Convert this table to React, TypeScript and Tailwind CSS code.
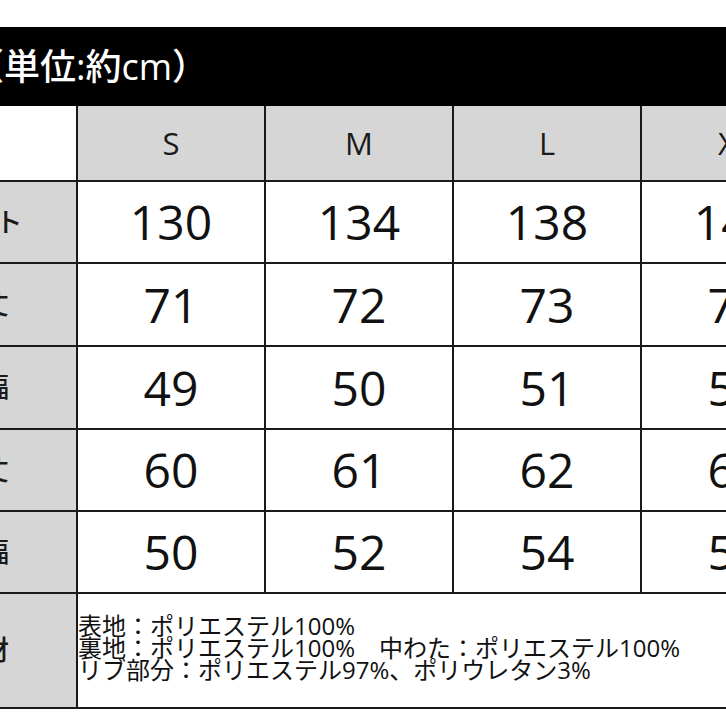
import React from "react";

const font = { fontFamily: '"Open Sans", "Noto Sans CJK JP", sans-serif' };

const rows: { label: string; vals: string[]; h: string }[] = [
  { label: "バスト", vals: ["130", "134", "138", "142"], h: "h-[80px]" },
  { label: "着丈", vals: ["71", "72", "73", "74"], h: "h-[81px]" },
  { label: "肩幅", vals: ["49", "50", "51", "52"], h: "h-[81px]" },
  { label: "袖丈", vals: ["60", "61", "62", "63"], h: "h-[80px]" },
  { label: "裾幅", vals: ["50", "52", "54", "56"], h: "h-[80px]" },
];

function Label({ text, h }: { text: string; h: string }) {
  return (
    <div className={`${h} bg-[#d6d6d6] flex justify-end items-center overflow-hidden`}>
      <div className="w-[188px] shrink-0 text-center text-[27px] font-medium text-[#1a1a1a] whitespace-nowrap">
        {text}
      </div>
    </div>
  );
}

export default function App() {
  return (
    <div className="w-[726px] h-[726px] bg-white overflow-hidden" style={font}>
      <div className="h-[27px]" />
      <div className="h-[79px] bg-black flex items-center overflow-hidden">
        <span className="-ml-[32px] text-[36px] font-medium text-white whitespace-nowrap leading-none">
          （単位:約cm）
        </span>
      </div>
      <div className="w-[830px] grid grid-cols-[76px_186px_186px_186px_186px] gap-[2px] bg-[#1a1a1a] pb-[2px]">
        <div className="h-[74px] bg-white" />
        {["S", "M", "L", "XL"].map((s) => (
          <div key={s} className="h-[74px] bg-[#d6d6d6] flex items-center justify-center text-[31px] text-[#1a1a1a]">
            {s}
          </div>
        ))}
        {rows.map((r) => (
          <React.Fragment key={r.label}>
            <Label text={r.label} h={r.h} />
            {r.vals.map((v, i) => (
              <div key={i} className={`${r.h} bg-white flex items-center justify-center text-[48px] text-[#111]`}>
                {v}
              </div>
            ))}
          </React.Fragment>
        ))}
        <Label text="素材" h="h-[113px]" />
        <div className="col-span-4 h-[113px] bg-white flex flex-col justify-center pb-[6px] text-[24px] leading-[22px] text-[#111] whitespace-nowrap">
          <div>表地：ポリエステル100%</div>
          <div>裏地：ポリエステル100%　中わた：ポリエステル100%</div>
          <div>リブ部分：ポリエステル97%、ポリウレタン3%</div>
        </div>
      </div>
    </div>
  );
}
